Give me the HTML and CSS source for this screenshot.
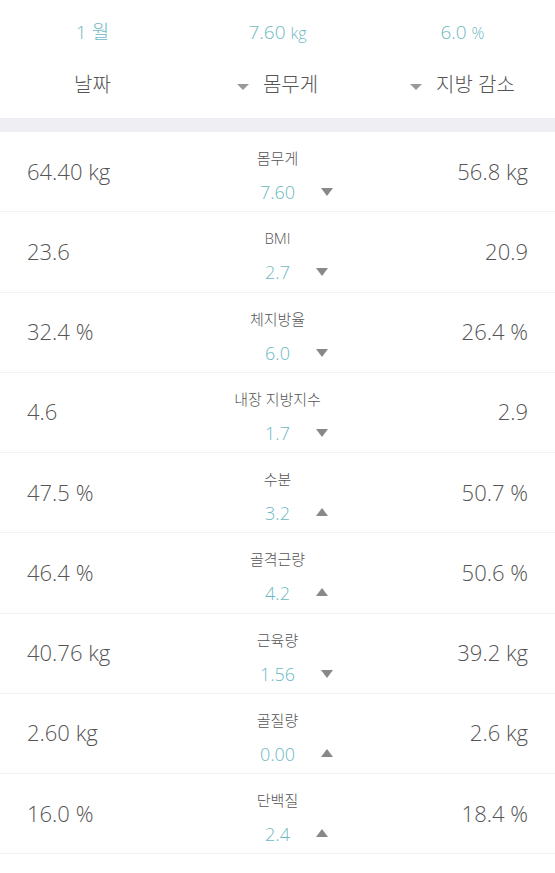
FILE: index.html
```html
<!DOCTYPE html>
<html lang="ko">
<head>
    <meta charset="UTF-8">
    <meta name="viewport" content="width=device-width, initial-scale=1.0">
    <title>체성분 비교</title>
    <link rel="stylesheet" href="styles.css">
</head>
<body>
    <div class="summary">
        <div class="summary-row totals">
            <span>1 월</span>
            <span>7.60 <small>kg</small></span>
            <span>6.0 <small>%</small></span>
        </div>
        <div class="summary-row titles">
            <span>날짜</span>
            <span><i class="tri-sm"></i>몸무게</span>
            <span><i class="tri-sm"></i>지방 감소</span>
        </div>
    </div>
    <div class="band"></div>

    <div class="list">
        <div class="item">
            <div class="before">64.40 kg</div>
            <div class="diff"><p class="label">몸무게</p><p class="val down">7.60</p></div>
            <div class="after">56.8 kg</div>
        </div>
        <div class="item">
            <div class="before">23.6</div>
            <div class="diff"><p class="label">BMI</p><p class="val down">2.7</p></div>
            <div class="after">20.9</div>
        </div>
        <div class="item">
            <div class="before">32.4 %</div>
            <div class="diff"><p class="label">체지방율</p><p class="val down">6.0</p></div>
            <div class="after">26.4 %</div>
        </div>
        <div class="item">
            <div class="before">4.6</div>
            <div class="diff"><p class="label">내장 지방지수</p><p class="val down">1.7</p></div>
            <div class="after">2.9</div>
        </div>
        <div class="item">
            <div class="before">47.5 %</div>
            <div class="diff"><p class="label">수분</p><p class="val up">3.2</p></div>
            <div class="after">50.7 %</div>
        </div>
        <div class="item">
            <div class="before">46.4 %</div>
            <div class="diff"><p class="label">골격근량</p><p class="val up">4.2</p></div>
            <div class="after">50.6 %</div>
        </div>
        <div class="item">
            <div class="before">40.76 kg</div>
            <div class="diff"><p class="label">근육량</p><p class="val down">1.56</p></div>
            <div class="after">39.2 kg</div>
        </div>
        <div class="item">
            <div class="before">2.60 kg</div>
            <div class="diff"><p class="label">골질량</p><p class="val up">0.00</p></div>
            <div class="after">2.6 kg</div>
        </div>
        <div class="item">
            <div class="before">16.0 %</div>
            <div class="diff"><p class="label">단백질</p><p class="val up">2.4</p></div>
            <div class="after">18.4 %</div>
        </div>
    </div>
</body>
</html>
```

FILE: styles.css
```css
body {
    margin: 0;
    background: #fff;
    color: #555;
    font-family: "Open Sans", "Noto Sans CJK KR", sans-serif;
    font-weight: 300;
}
.summary {
    height: 118px;
}
.summary-row {
    display: grid;
    grid-template-columns: 1fr 1fr 1fr;
    text-align: center;
}
.totals {
    padding-top: 17px;
    height: 30px;
    line-height: 30px;
    font-size: 19px;
    color: #6db9c2;
}
.totals small {
    font-size: 16px;
}
.titles {
    padding-top: 23px;
    line-height: 30px;
    font-size: 20px;
    color: #555;
}
.tri-sm {
    display: inline-block;
    width: 0;
    height: 0;
    margin-right: 14px;
    vertical-align: middle;
    border-left: 6px solid transparent;
    border-right: 6px solid transparent;
    border-top: 6px solid #999;
}
.band {
    height: 14px;
    background: #efeff3;
}
.item {
    box-sizing: border-box;
    height: 80.25px;
    display: grid;
    grid-template-columns: 1fr 1fr 1fr;
    align-items: center;
    padding: 0 27px;
    border-bottom: 1px solid #f2f2f2;
    font-size: 22px;
}
.before {
    margin-top: -2px;
}
.after {
    margin-top: -2px;
    text-align: right;
}
.diff {
    align-self: start;
    padding-top: 16px;
    text-align: center;
}
.diff p {
    margin: 0;
}
.label {
    font-size: 15px;
    line-height: 20px;
}
.val {
    position: relative;
    display: inline-block;
    margin-top: 12px !important;
    font-size: 18px;
    line-height: 24px;
    color: #6db9c2;
}
.val::after {
    content: "";
    position: absolute;
    left: calc(100% + 26px);
    top: 50%;
    border-left: 6.5px solid transparent;
    border-right: 6.5px solid transparent;
}
.down::after {
    margin-top: -4px;
    border-top: 8px solid #888;
}
.up::after {
    margin-top: -5px;
    border-bottom: 8px solid #888;
}
```
